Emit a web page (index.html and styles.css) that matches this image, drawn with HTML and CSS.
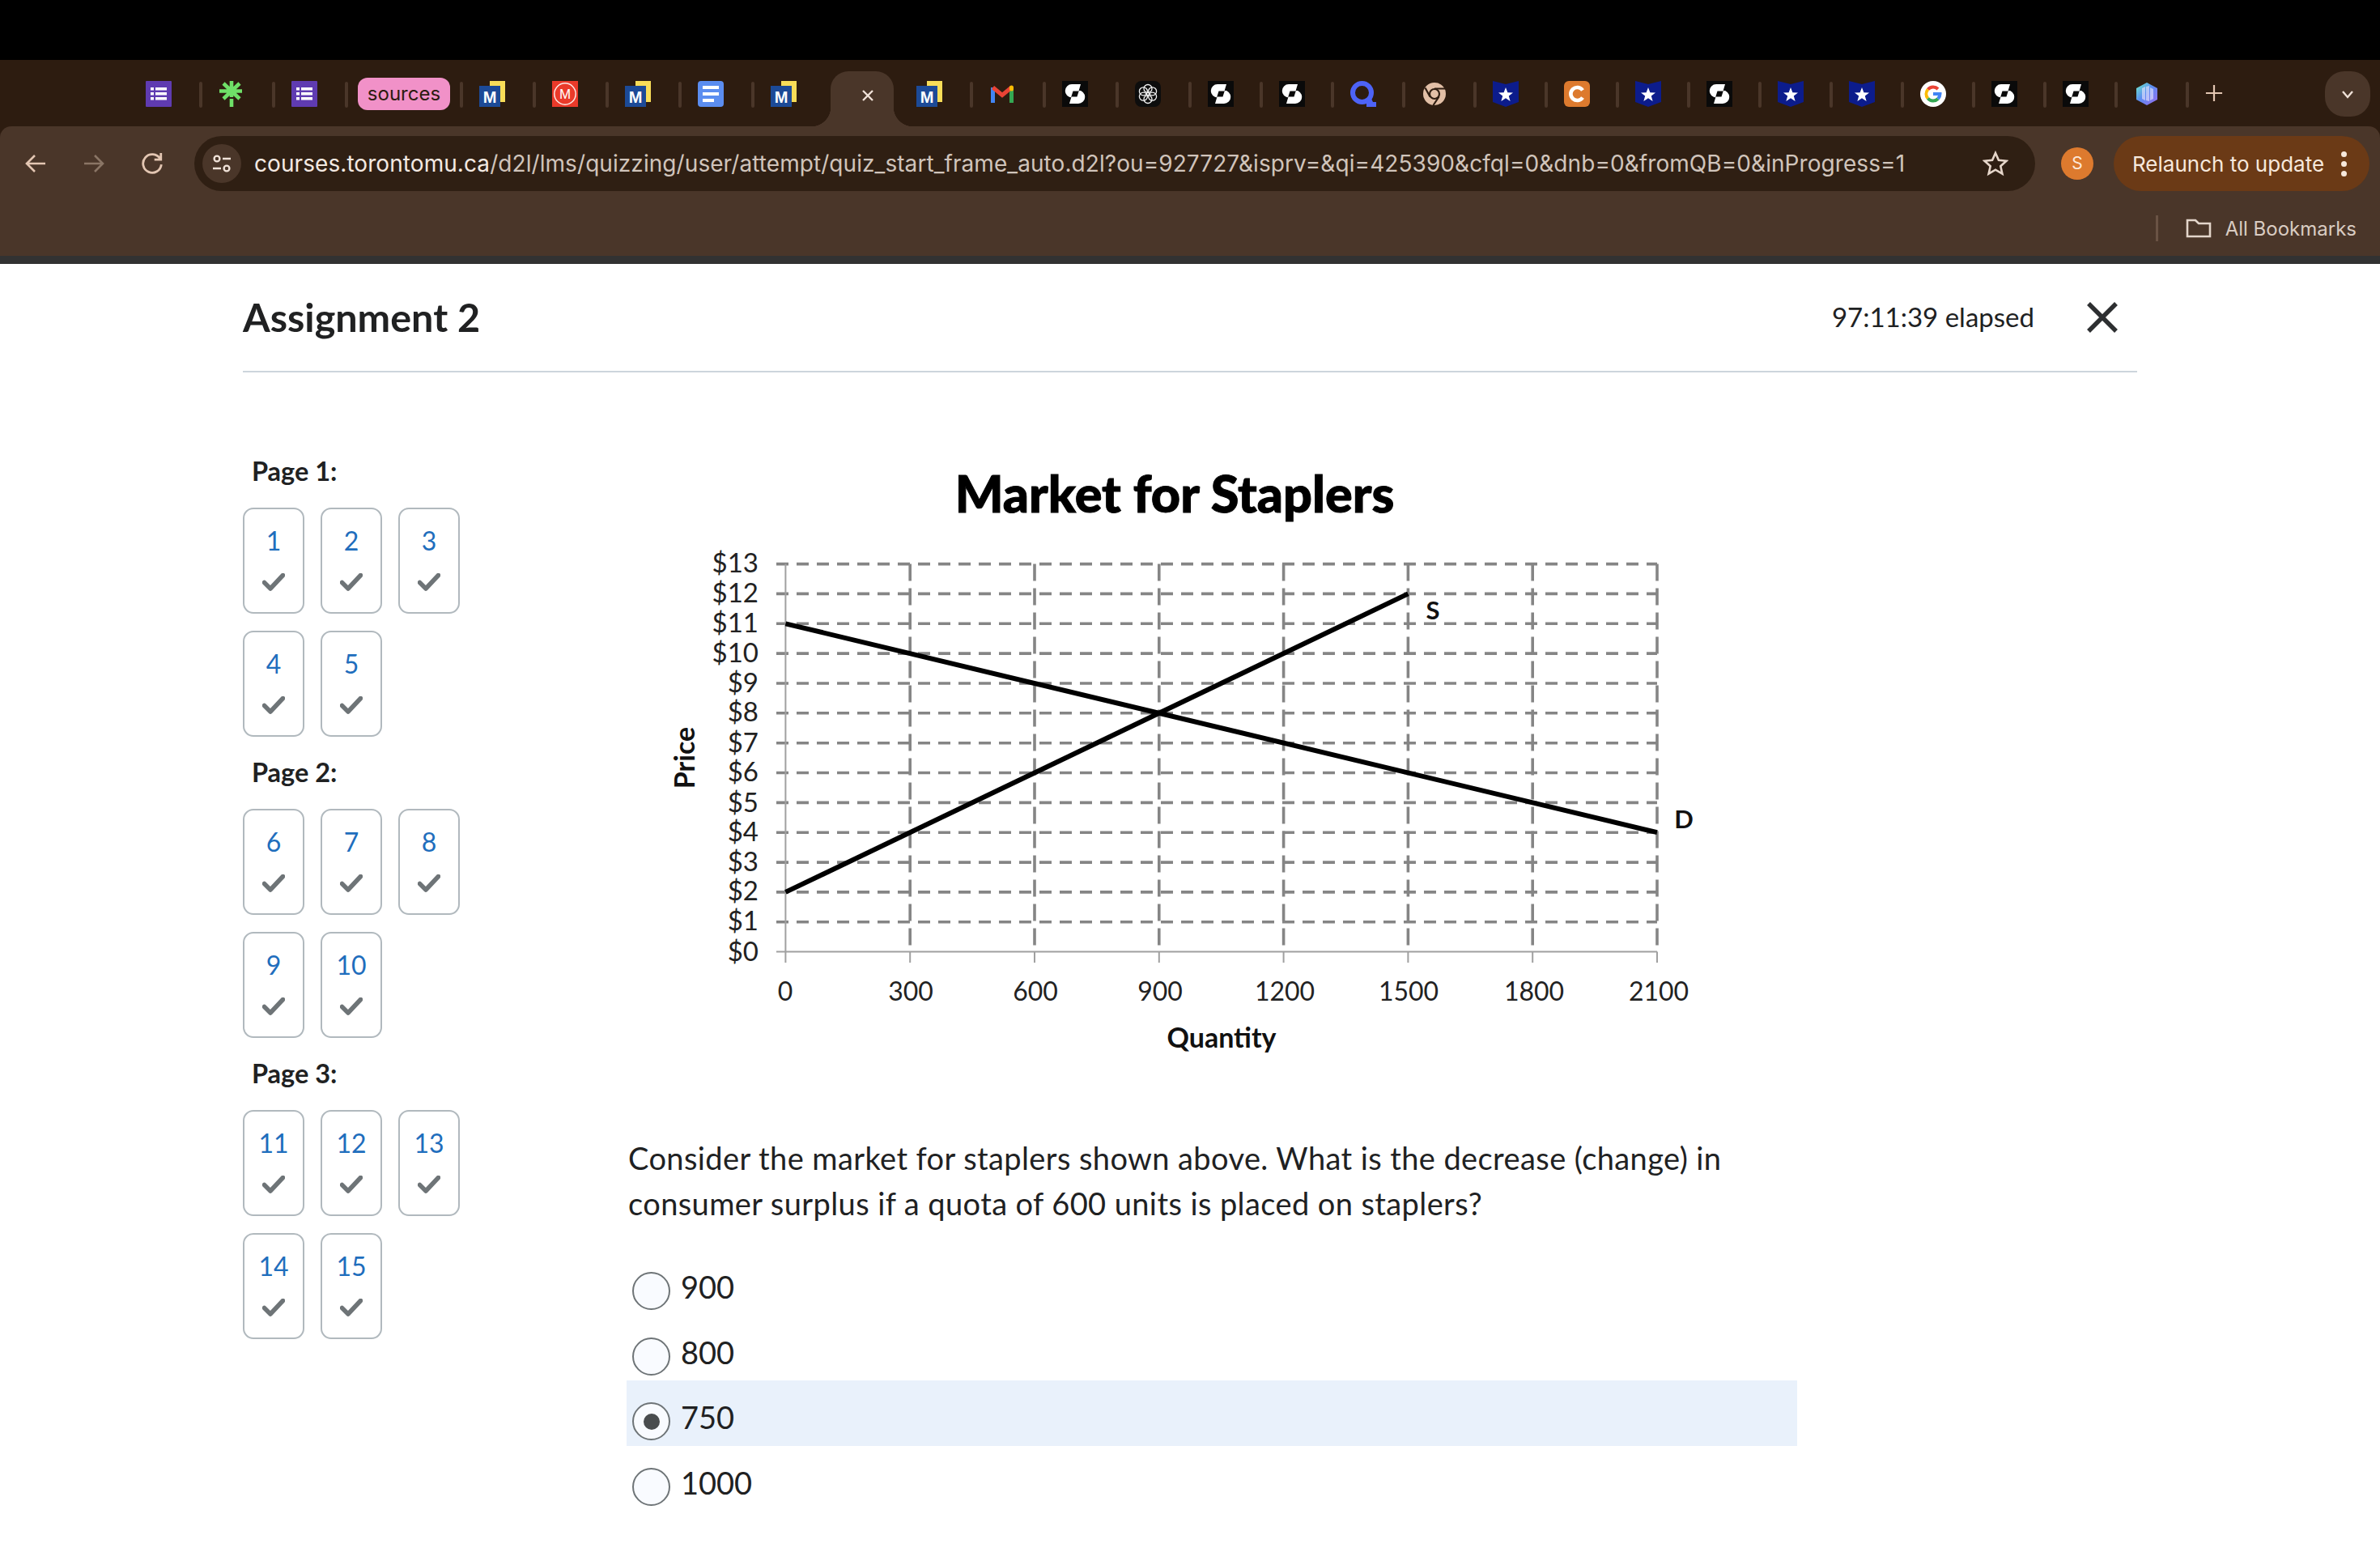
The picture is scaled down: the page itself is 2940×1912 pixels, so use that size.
FILE: index.html
```html
<!DOCTYPE html>
<html lang="en">

<head>
    <meta charset="UTF-8">
    <meta name="viewport" content="width=device-width, initial-scale=1.0">
    <title>Assignment 2</title>
    <link rel="stylesheet" href="styles.css">
</head>

<body>
    <!-- favicons, reused in the tab strip -->
    <svg class="icon-defs" xmlns="http://www.w3.org/2000/svg">
        <defs>
            <linearGradient id="crystalFill" x1="0" y1="0" x2="1" y2="1">
                <stop offset="0" stop-color="#6ff0c8" />
                <stop offset="0.45" stop-color="#5b8df0" />
                <stop offset="1" stop-color="#9a6cf0" />
            </linearGradient>
        </defs>
        <symbol id="i-forms" viewBox="0 0 32 32">
            <rect width="32" height="32" rx="1" fill="#5f3bb1" />
            <path fill="#fff" d="M6 8h4v3.6H6zM12 8h14v3.6H12zM6 14h4v3.6H6zM12 14h14v3.6H12zM6 20h4v3.6H6zM12 20h14v3.6H12z" />
        </symbol>
        <symbol id="i-tree" viewBox="0 0 32 32">
            <path fill="none" stroke="#6fe068" stroke-width="4.6" d="M16 0v20M16 22v10M1 12.5h28M6 3l20 19M26 3L6 22" />
        </symbol>
        <symbol id="i-mbook" viewBox="0 0 32 32">
            <rect x="13" width="19" height="26" fill="#f8dd58" />
            <rect y="6" width="26" height="26" fill="#1c4a97" />
        </symbol>
        <symbol id="i-red" viewBox="0 0 32 32">
            <rect width="32" height="32" fill="#ea3a2a" />
            <circle cx="16" cy="16" r="13.2" fill="none" stroke="#fbe6e3" stroke-width="1.5" />
        </symbol>
        <symbol id="i-docs" viewBox="0 0 32 32">
            <rect width="32" height="32" rx="4" fill="#5b8df0" />
            <path fill="#fff" d="M6 6h20v4H6zM6 14h20v4H6zM6 22h14v4H6z" />
        </symbol>
        <symbol id="i-gmail" viewBox="0 0 32 32">
            <path fill="none" stroke="#4285f4" stroke-width="5" d="M4.5 8v19" />
            <path fill="none" stroke="#34a853" stroke-width="5" d="M27.5 8v19" />
            <path fill="none" stroke="#ea4335" stroke-width="5" d="M4.5 8L16 17.5L27.5 8" />
            <path fill="none" stroke="#fbbc04" stroke-width="5" stroke-linecap="round" d="M27.5 8v2" />
        </symbol>
        <symbol id="i-s" viewBox="0 0 32 32">
            <rect width="32" height="32" fill="#0a0a0a" />
            <path fill="#fff" d="M12 4H23L20.5 12.5H13.5L11 20.5H12a8.25 8.25 0 0 1 0-16.5z" />
            <path fill="#fff" d="M20 28H9L11.5 19.5H18.5L21 11.5H20a8.25 8.25 0 0 1 0 16.5z" />
        </symbol>
        <symbol id="i-gpt" viewBox="0 0 32 32">
            <rect width="32" height="32" rx="8" fill="#0d0d0d" />
            <g fill="none" stroke="#f2f2f2" stroke-width="1.3">
                <circle cx="16" cy="9.5" r="5" />
                <circle cx="21.6" cy="12.8" r="5" />
                <circle cx="21.6" cy="19.2" r="5" />
                <circle cx="16" cy="22.5" r="5" />
                <circle cx="10.4" cy="19.2" r="5" />
                <circle cx="10.4" cy="12.8" r="5" />
            </g>
        </symbol>
        <symbol id="i-q" viewBox="0 0 32 32">
            <circle cx="14.5" cy="14.5" r="11.5" fill="none" stroke="#4d63f7" stroke-width="6" />
            <path fill="#4d63f7" d="M20 25l6-3 2 4h4v6H20z" />
        </symbol>
        <symbol id="i-chrome" viewBox="0 0 32 32">
            <circle cx="16" cy="16" r="14" fill="#e2bfa6" />
            <circle cx="16" cy="16" r="6" fill="#e2bfa6" stroke="#2d1c10" stroke-width="2.2" />
            <path fill="none" stroke="#2d1c10" stroke-width="2.2" d="M16 9.5H29M10.5 19.5L4.5 8.5M21.5 19.5L14.5 30" />
        </symbol>
        <symbol id="i-star" viewBox="0 0 32 32">
            <path fill="#0c1c8c" d="M0 0L16 4L32 0V26L16 32L0 26z" />
            <path fill="#fff" d="M16 8l2.4 6.2 6.6.3-5.2 4.1 1.8 6.4-5.6-3.7-5.6 3.7 1.8-6.4-5.2-4.1 6.6-.3z" />
        </symbol>
        <symbol id="i-c" viewBox="0 0 32 32">
            <rect width="32" height="32" rx="6" fill="#dd7a2e" />
            <path fill="none" stroke="#fff" stroke-width="4.6" d="M23 11.5A8 8 0 1 0 23 20.5" />
        </symbol>
        <symbol id="i-g" viewBox="0 0 32 32">
            <circle cx="16" cy="16" r="16" fill="#fff" />
            <g fill="none" stroke-width="4">
                <path stroke="#ea4335" d="M9.5 10.5A8.5 8.5 0 0 1 22 10" />
                <path stroke="#fbbc04" d="M9.5 10.5A8.5 8.5 0 0 0 9.5 21.5" />
                <path stroke="#34a853" d="M9.5 21.5A8.5 8.5 0 0 0 22 22" />
                <path stroke="#4285f4" d="M22 22A8.5 8.5 0 0 0 24.5 16H16" />
            </g>
        </symbol>
        <symbol id="i-crystal" viewBox="0 0 32 32">
            <path fill="url(#crystalFill)" d="M16 2L29 9V23L16 30L3 23V9z" />
            <path fill="#efeafd" opacity="0.6" d="M10 9l4-2v17l-4-2zM15 7l4-1v19l-4-1zM20 8l4 2v12l-4 2z" />
        </symbol>
    </svg>

    <header class="browser">
        <div class="tab-strip">
            <div class="tab"><svg class="favicon"><use href="#i-forms" /></svg><span class="sep"></span></div>
            <div class="tab"><svg class="favicon"><use href="#i-tree" /></svg><span class="sep"></span></div>
            <div class="tab"><svg class="favicon"><use href="#i-forms" /></svg><span class="sep"></span></div>
            <div class="tab tab-group"><span class="group-pill">sources</span><span class="sep"></span></div>
            <div class="tab"><svg class="favicon"><use href="#i-mbook" /><text class="icon-letter" x="13" y="26.5">M</text></svg><span class="sep"></span></div>
            <div class="tab"><svg class="favicon"><use href="#i-red" /><text class="icon-letter thin" x="16" y="22">M</text></svg><span class="sep"></span></div>
            <div class="tab"><svg class="favicon"><use href="#i-mbook" /><text class="icon-letter" x="13" y="26.5">M</text></svg><span class="sep"></span></div>
            <div class="tab"><svg class="favicon"><use href="#i-docs" /></svg><span class="sep"></span></div>
            <div class="tab"><svg class="favicon"><use href="#i-mbook" /><text class="icon-letter" x="13" y="26.5">M</text></svg></div>
            <div class="tab tab-active">
                <svg class="tab-close" viewBox="0 0 16 16"><path d="M2 2l12 12M14 2L2 14" /></svg>
            </div>
            <div class="tab"><svg class="favicon"><use href="#i-mbook" /><text class="icon-letter" x="13" y="26.5">M</text></svg><span class="sep"></span></div>
            <div class="tab"><svg class="favicon"><use href="#i-gmail" /></svg><span class="sep"></span></div>
            <div class="tab"><svg class="favicon"><use href="#i-s" /></svg><span class="sep"></span></div>
            <div class="tab"><svg class="favicon"><use href="#i-gpt" /></svg><span class="sep"></span></div>
            <div class="tab tab-small"><svg class="favicon"><use href="#i-s" /></svg><span class="sep"></span></div>
            <div class="tab tab-small"><svg class="favicon"><use href="#i-s" /></svg><span class="sep"></span></div>
            <div class="tab tab-small"><svg class="favicon"><use href="#i-q" /></svg><span class="sep"></span></div>
            <div class="tab tab-small"><svg class="favicon"><use href="#i-chrome" /></svg><span class="sep"></span></div>
            <div class="tab tab-small"><svg class="favicon"><use href="#i-star" /></svg><span class="sep"></span></div>
            <div class="tab tab-small"><svg class="favicon"><use href="#i-c" /></svg><span class="sep"></span></div>
            <div class="tab tab-small"><svg class="favicon"><use href="#i-star" /></svg><span class="sep"></span></div>
            <div class="tab tab-small"><svg class="favicon"><use href="#i-s" /></svg><span class="sep"></span></div>
            <div class="tab tab-small"><svg class="favicon"><use href="#i-star" /></svg><span class="sep"></span></div>
            <div class="tab tab-small"><svg class="favicon"><use href="#i-star" /></svg><span class="sep"></span></div>
            <div class="tab tab-small"><svg class="favicon"><use href="#i-g" /></svg><span class="sep"></span></div>
            <div class="tab tab-small"><svg class="favicon"><use href="#i-s" /></svg><span class="sep"></span></div>
            <div class="tab tab-small"><svg class="favicon"><use href="#i-s" /></svg><span class="sep"></span></div>
            <div class="tab tab-small"><svg class="favicon"><use href="#i-crystal" /></svg><span class="sep"></span></div>
            <svg class="new-tab" viewBox="0 0 24 24"><path d="M12 1v22M1 12h22" /></svg>
            <div class="tab-search">
                <svg viewBox="0 0 16 16"><path d="M2 5l6 7 6-7" /></svg>
            </div>
        </div>

        <div class="toolbar">
            <div class="nav-row">
                <button class="nav-btn">
                    <svg viewBox="0 0 26 24"><path d="M25 12H3M12 2L2 12l10 10" /></svg>
                </button>
                <button class="nav-btn nav-off">
                    <svg viewBox="0 0 26 24"><path d="M1 12h22M14 2l10 10-10 10" /></svg>
                </button>
                <button class="nav-btn nav-reload">
                    <svg viewBox="0 0 26 26"><path d="M22 7.5A10.5 10.5 0 1 0 23.5 14M23 1v7.5h-7.5" /></svg>
                </button>
                <div class="omnibox">
                    <span class="site-info">
                        <svg viewBox="0 0 26 26">
                            <circle cx="7" cy="7" r="3.4" />
                            <circle cx="19" cy="19" r="3.4" />
                            <path d="M14 7h10M2 19h10" />
                        </svg>
                    </span>
                    <span class="url"><span class="url-host">courses.torontomu.ca</span>/d2l/lms/quizzing/user/attempt/quiz_start_frame_auto.d2l?ou=927727&amp;isprv=&amp;qi=425390&amp;cfql=0&amp;dnb=0&amp;fromQB=0&amp;inProgress=1</span>
                    <svg class="bookmark-star" viewBox="0 0 32 32"><path d="M16 3l3.9 8.8 9.6 1-7.2 6.4 2.1 9.4-8.4-4.9-8.4 4.9 2.1-9.4-7.2-6.4 9.6-1z" /></svg>
                </div>
                <span class="avatar">S</span>
                <div class="relaunch">
                    <span>Relaunch to update</span>
                    <span class="dots"><i></i><i></i><i></i></span>
                </div>
            </div>
            <div class="bookmarks">
                <span class="bookmarks-sep"></span>
                <svg class="folder" viewBox="0 0 32 24"><path d="M2 22V2h10l4 4h14v16z" /></svg>
                <span>All Bookmarks</span>
            </div>
        </div>
    </header>

    <main class="quiz">
        <div class="quiz-head">
            <h1>Assignment 2</h1>
            <div class="timer">97:11:39 elapsed</div>
            <svg class="quiz-close" viewBox="0 0 40 40"><path d="M3 3l34 34M37 3L3 37" /></svg>
        </div>

        <div class="quiz-body">
            <aside class="pages">
                <h2>Page 1:</h2>
                <div class="page-grid">
                    <a class="q-box">1<svg viewBox="0 0 28 22"><path d="M2.5 11.5L10 19L25.5 2.5" /></svg></a>
                    <a class="q-box">2<svg viewBox="0 0 28 22"><path d="M2.5 11.5L10 19L25.5 2.5" /></svg></a>
                    <a class="q-box">3<svg viewBox="0 0 28 22"><path d="M2.5 11.5L10 19L25.5 2.5" /></svg></a>
                    <a class="q-box">4<svg viewBox="0 0 28 22"><path d="M2.5 11.5L10 19L25.5 2.5" /></svg></a>
                    <a class="q-box">5<svg viewBox="0 0 28 22"><path d="M2.5 11.5L10 19L25.5 2.5" /></svg></a>
                </div>
                <h2>Page 2:</h2>
                <div class="page-grid">
                    <a class="q-box">6<svg viewBox="0 0 28 22"><path d="M2.5 11.5L10 19L25.5 2.5" /></svg></a>
                    <a class="q-box">7<svg viewBox="0 0 28 22"><path d="M2.5 11.5L10 19L25.5 2.5" /></svg></a>
                    <a class="q-box">8<svg viewBox="0 0 28 22"><path d="M2.5 11.5L10 19L25.5 2.5" /></svg></a>
                    <a class="q-box">9<svg viewBox="0 0 28 22"><path d="M2.5 11.5L10 19L25.5 2.5" /></svg></a>
                    <a class="q-box">10<svg viewBox="0 0 28 22"><path d="M2.5 11.5L10 19L25.5 2.5" /></svg></a>
                </div>
                <h2>Page 3:</h2>
                <div class="page-grid">
                    <a class="q-box">11<svg viewBox="0 0 28 22"><path d="M2.5 11.5L10 19L25.5 2.5" /></svg></a>
                    <a class="q-box">12<svg viewBox="0 0 28 22"><path d="M2.5 11.5L10 19L25.5 2.5" /></svg></a>
                    <a class="q-box">13<svg viewBox="0 0 28 22"><path d="M2.5 11.5L10 19L25.5 2.5" /></svg></a>
                    <a class="q-box">14<svg viewBox="0 0 28 22"><path d="M2.5 11.5L10 19L25.5 2.5" /></svg></a>
                    <a class="q-box">15<svg viewBox="0 0 28 22"><path d="M2.5 11.5L10 19L25.5 2.5" /></svg></a>
                </div>
            </aside>

            <section class="question">
                <svg class="chart" viewBox="774 560 1446 760">
                    <text class="chart-title" x="1451" y="633">Market for Staplers</text>

                    <path class="grid" d="M959 696.6H2047M959 733.4H2047M959 770.3H2047M959 807.1H2047M959 844H2047M959 880.8H2047M959 917.7H2047M959 954.5H2047M959 991.4H2047M959 1028.2H2047M959 1065.1H2047M959 1101.9H2047M959 1138.8H2047" />
                    <path class="grid grid-v" d="M1124.2 696.6V1175M1278 696.6V1175M1431.8 696.6V1175M1585.6 696.6V1175M1739.4 696.6V1175M1893.2 696.6V1175M2047 696.6V1175" />
                    <path class="axis" d="M970.4 696.6V1175.6M959 1175.6H2047M970.4 1175.6V1189M1124.2 1175.6V1189M1278 1175.6V1189M1431.8 1175.6V1189M1585.6 1175.6V1189M1739.4 1175.6V1189M1893.2 1175.6V1189M2047 1175.6V1189" />

                    <path class="curve" d="M970.4 1101.9L1739.4 733.4" />
                    <path class="curve" d="M970.4 770.3L2047 1028.2" />

                    <g class="y-labels">
                        <text x="937" y="707">$13</text>
                        <text x="937" y="744">$12</text>
                        <text x="937" y="781">$11</text>
                        <text x="937" y="818">$10</text>
                        <text x="937" y="855">$9</text>
                        <text x="937" y="891">$8</text>
                        <text x="937" y="929">$7</text>
                        <text x="937" y="965">$6</text>
                        <text x="937" y="1003">$5</text>
                        <text x="937" y="1039">$4</text>
                        <text x="937" y="1076">$3</text>
                        <text x="937" y="1112">$2</text>
                        <text x="937" y="1149">$1</text>
                        <text x="937" y="1187">$0</text>
                    </g>
                    <g class="x-labels">
                        <text x="970" y="1236">0</text>
                        <text x="1125" y="1236">300</text>
                        <text x="1279" y="1236">600</text>
                        <text x="1433" y="1236">900</text>
                        <text x="1587" y="1236">1200</text>
                        <text x="1740" y="1236">1500</text>
                        <text x="1895" y="1236">1800</text>
                        <text x="2049" y="1236">2100</text>
                    </g>

                    <text class="axis-name" x="1509" y="1294">Quantity</text>
                    <text class="axis-name" transform="translate(858 936) rotate(-90)">Price</text>
                    <text class="curve-name" x="1770" y="765">S</text>
                    <text class="curve-name" x="2080" y="1023">D</text>
                </svg>

                <p class="prompt">Consider the market for staplers shown above. What is the decrease (change) in consumer surplus if a quota of 600 units is placed on staplers?</p>

                <div class="options">
                    <label class="option"><span class="radio"></span>900</label>
                    <label class="option"><span class="radio"></span>800</label>
                    <label class="option option-picked"><span class="radio radio-on"></span>750</label>
                    <label class="option"><span class="radio"></span>1000</label>
                </div>
            </section>
        </div>
    </main>
</body>

</html>
```
FILE: styles.css
```css
* {
    box-sizing: border-box;
}

html,
body {
    height: 100%;
}

body {
    margin: 0;
    overflow: hidden;
    background-color: #fff;
    font-family: Lato, "Open Sans", sans-serif;
    color: #202122;
}

.icon-defs {
    position: absolute;
    width: 0;
    height: 0;
}

/* browser chrome */
.browser {
    padding-top: 74px;
    border-bottom: 10px solid #323232;
    background: linear-gradient(#000 74px, #2d1c10 74px);
    font-family: Inter, Roboto, sans-serif;
}

.tab-strip {
    display: flex;
    align-items: flex-end;
    height: 82px;
    padding-left: 160px;
}

.tab {
    display: flex;
    align-items: flex-start;
    justify-content: space-between;
    flex: none;
    width: 90px;
    height: 68px;
    padding: 12px 0 0 20px;
}

.tab-small {
    width: 88px;
}

.tab-group {
    width: 142px;
    padding-left: 12px;
}

.favicon {
    width: 32px;
    height: 32px;
}

.icon-letter {
    fill: #fff;
    font-family: "Liberation Sans", sans-serif;
    font-size: 20px;
    font-weight: bold;
    text-anchor: middle;
}

.icon-letter.thin {
    font-size: 17px;
    font-weight: normal;
}

.sep {
    width: 4px;
    height: 32px;
    margin-top: 1px;
    background-color: #4a3629;
    border-radius: 2px;
}

.group-pill {
    width: 114px;
    height: 40px;
    margin-top: -4px;
    border-radius: 12px;
    background-color: #f191c8;
    color: #2d1c10;
    font-size: 24px;
    line-height: 40px;
    text-align: center;
}

.tab-active {
    position: relative;
    width: 78px;
    margin: 0 8px 0 4px;
    padding: 0;
    align-items: center;
    justify-content: center;
    border-radius: 22px 22px 0 0;
    background-color: #4a3629;
}

.tab-active::before,
.tab-active::after {
    content: "";
    position: absolute;
    bottom: 0;
    width: 24px;
    height: 24px;
}

.tab-active::before {
    left: -24px;
    background: radial-gradient(circle at 0 0, transparent 24px, #4a3629 24.5px);
}

.tab-active::after {
    right: -24px;
    background: radial-gradient(circle at 100% 0, transparent 24px, #4a3629 24.5px);
}

.tab-close {
    width: 16px;
    height: 16px;
    margin: -8px 0 0 14px;
    fill: none;
    stroke: #f0e2d8;
    stroke-width: 2.4;
}

.new-tab {
    width: 22px;
    height: 22px;
    margin: 0 0 30px 20px;
    fill: none;
    stroke: #e3c6b2;
    stroke-width: 2.4;
}

.tab-search {
    display: flex;
    align-items: center;
    justify-content: center;
    width: 56px;
    height: 56px;
    margin: 0 12px 12px auto;
    border-radius: 24px;
    background-color: #4a3629;
}

.tab-search svg {
    width: 16px;
    height: 16px;
    fill: none;
    stroke: #f0e2d8;
    stroke-width: 2.4;
}

.toolbar {
    height: 160px;
    padding: 12px 13px 0 8px;
    border-radius: 14px 14px 0 0;
    background-color: #4a3629;
}

.nav-row {
    display: flex;
    align-items: center;
    height: 68px;
}

.nav-btn {
    display: flex;
    align-items: center;
    justify-content: center;
    width: 72px;
    height: 48px;
    padding: 0;
    border: none;
    background: none;
}

.nav-btn svg {
    width: 26px;
    height: 24px;
    fill: none;
    stroke: #e3c6b2;
    stroke-width: 2.6;
}

.nav-off svg {
    stroke: #8a7565;
}

.nav-reload svg {
    width: 28px;
    height: 28px;
}

.omnibox {
    display: flex;
    align-items: center;
    flex: 1;
    height: 68px;
    margin-left: 16px;
    padding: 0 33px 0 10px;
    border-radius: 34px;
    background-color: #2f1f13;
}

.site-info {
    display: flex;
    align-items: center;
    justify-content: center;
    width: 48px;
    height: 48px;
    border-radius: 50%;
    background-color: #4a3629;
}

.site-info svg {
    width: 26px;
    height: 26px;
    fill: none;
    stroke: #f0e2d8;
    stroke-width: 2.4;
}

.url {
    margin-left: 16px;
    color: #d0c4bb;
    font-size: 28px;
    letter-spacing: 0.07px;
    white-space: nowrap;
}

.url-host {
    color: #f3e9e2;
}

.bookmark-star {
    width: 32px;
    height: 32px;
    margin-left: auto;
    fill: none;
    stroke: #e6d6ca;
    stroke-width: 2.6;
}

.avatar {
    width: 40px;
    height: 40px;
    margin: 0 25px 0 32px;
    border-radius: 50%;
    background-color: #dd7a2e;
    color: #fde8d8;
    font-size: 21px;
    line-height: 40px;
    text-align: center;
}

.relaunch {
    display: flex;
    align-items: center;
    width: 316px;
    height: 68px;
    padding-left: 23px;
    border-radius: 34px;
    background-color: #6b3a16;
    color: #f6e8dc;
    font-size: 26px;
    white-space: nowrap;
}

.dots {
    display: flex;
    flex-direction: column;
    gap: 5px;
    margin-left: 21px;
}

.dots i {
    width: 7px;
    height: 7px;
    border-radius: 50%;
    background-color: #f6e8dc;
}

.bookmarks {
    display: flex;
    align-items: center;
    justify-content: flex-end;
    height: 68px;
    margin-top: 12px;
    padding-right: 16px;
    color: #d9ccc2;
    font-size: 24px;
}

.bookmarks-sep {
    width: 3px;
    height: 32px;
    margin-right: 34px;
    background-color: #6a5344;
}

.folder {
    width: 32px;
    height: 24px;
    margin-right: 17px;
    fill: none;
    stroke: #e3d5ca;
    stroke-width: 2.6;
}

/* quiz page */
.quiz {
    width: 2340px;
    margin-left: 300px;
}

.quiz-head {
    display: flex;
    align-items: center;
    height: 134px;
    border-bottom: 2px solid #cdd5dc;
}

h1 {
    flex: 1;
    margin: 0 0 2px;
    font-size: 48.5px;
    font-weight: 700;
}

.timer {
    margin-bottom: 2px;
    font-size: 33px;
}

.quiz-close {
    width: 40px;
    height: 40px;
    margin: 0 23px 0 64px;
    fill: none;
    stroke: #2d2f31;
    stroke-width: 5.5;
}

.quiz-body {
    display: flex;
}

.pages {
    flex: none;
    width: 474px;
    padding-top: 102px;
}

h2 {
    margin: 0 0 25px 11px;
    font-size: 32.5px;
    font-weight: 700;
    line-height: 40px;
}

.page-grid {
    display: grid;
    grid-template-columns: repeat(3, 76px);
    gap: 21px 20px;
    margin-bottom: 24px;
}

.q-box {
    display: flex;
    flex-direction: column;
    align-items: center;
    height: 131px;
    padding-top: 19px;
    border: 2px solid #b1b9be;
    border-radius: 13px;
    color: #1f6ebd;
    font-size: 32px;
    line-height: 40px;
}

.q-box svg {
    width: 28px;
    height: 22px;
    margin-top: 20px;
    fill: none;
    stroke: #6e7477;
    stroke-width: 5.5;
    stroke-linecap: round;
    stroke-linejoin: round;
}

.question {
    width: 1446px;
    padding-top: 100px;
}

.chart {
    display: block;
    width: 1446px;
    height: 760px;
}

.chart-title {
    font-size: 63px;
    font-weight: 900;
    text-anchor: middle;
    fill: #000;
    stroke: #000;
    stroke-width: 1;
}

.grid {
    fill: none;
    stroke: #858585;
    stroke-width: 3.6;
    stroke-dasharray: 15 10;
}

.grid-v {
    stroke-dasharray: 21 9;
}

.axis {
    fill: none;
    stroke: #a0a0a0;
    stroke-width: 2;
}

.curve {
    fill: none;
    stroke: #000;
    stroke-width: 6;
}

.y-labels text {
    font-size: 33px;
    text-anchor: end;
    fill: #222;
}

.x-labels text {
    font-size: 32px;
    text-anchor: middle;
    fill: #222;
}

.axis-name {
    font-size: 34px;
    font-weight: 700;
    text-anchor: middle;
    fill: #111;
}

.curve-name {
    font-size: 31px;
    font-weight: 700;
    text-anchor: middle;
    fill: #111;
}

.prompt {
    margin: 82px 0 30px;
    padding-left: 2px;
    font-size: 38px;
    letter-spacing: 0.4px;
    line-height: 56px;
}

.option {
    display: flex;
    align-items: flex-start;
    height: 80.5px;
    padding: 17px 0 0 7px;
    font-size: 38px;
    line-height: 57px;
}

.option-picked {
    background-color: #e9f1fb;
}

.radio {
    flex: none;
    width: 47px;
    height: 47px;
    margin: 10px 13px 0 0;
    border: 2.5px solid #6e7477;
    border-radius: 50%;
    background-color: #f9fbff;
}

.radio-on {
    display: flex;
    align-items: center;
    justify-content: center;
}

.radio-on::after {
    content: "";
    width: 20px;
    height: 20px;
    border-radius: 50%;
    background-color: #494c4e;
}
```
